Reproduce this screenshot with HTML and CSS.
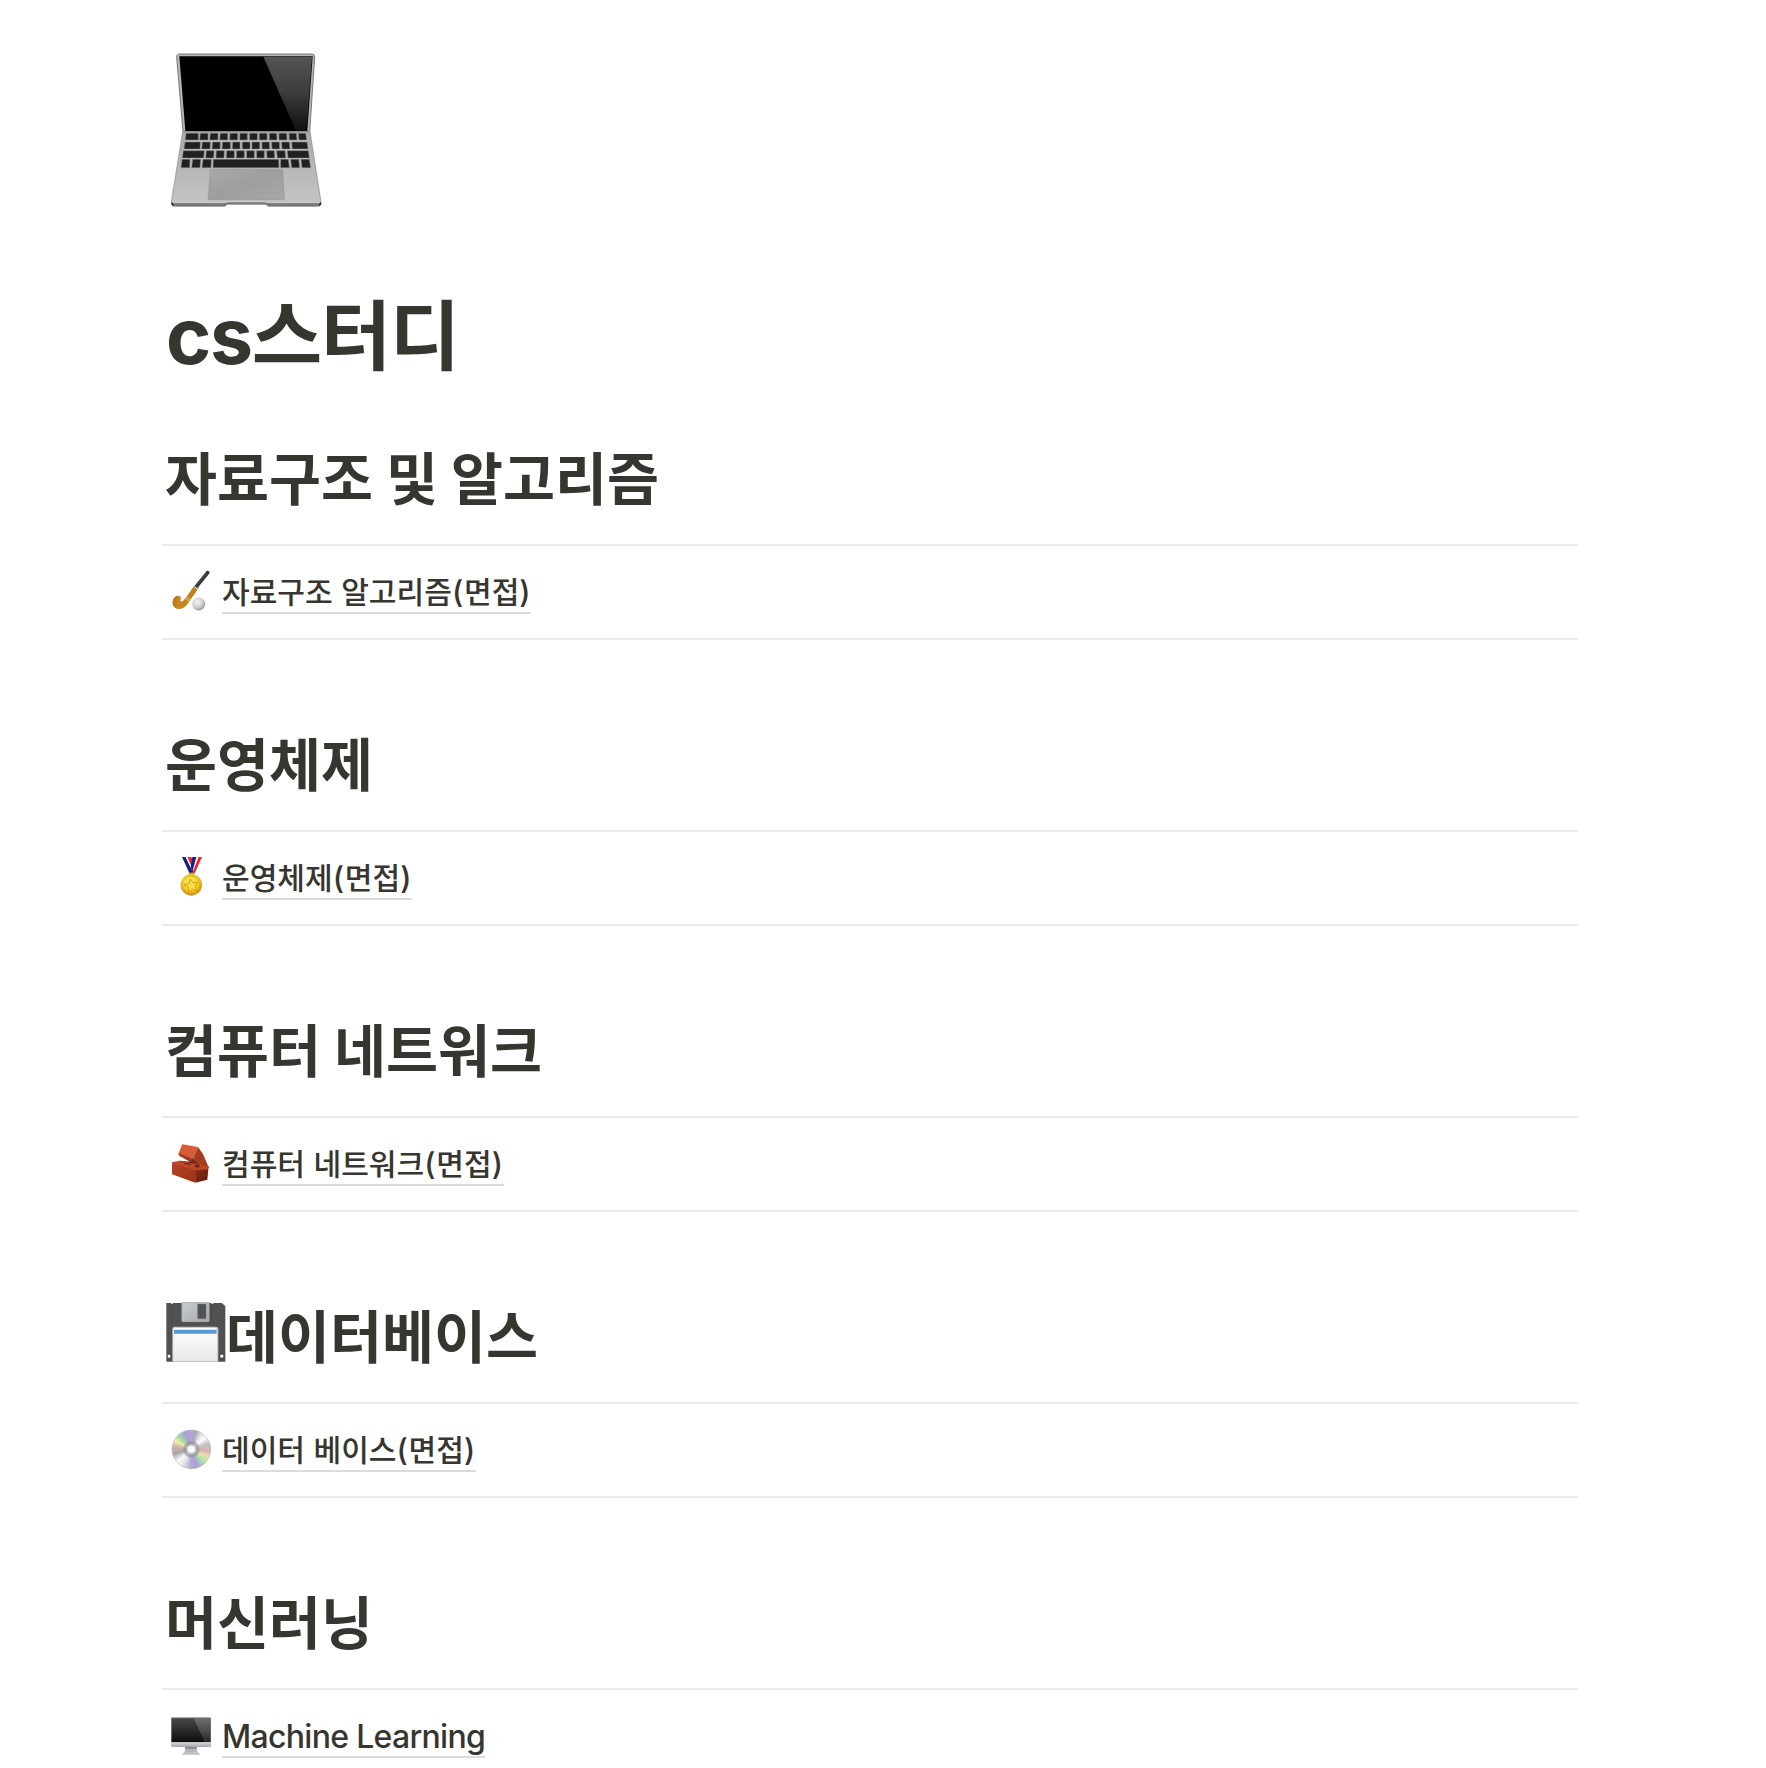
FILE: index.html
```html
<!DOCTYPE html>
<html lang="ko">
<head>
<meta charset="utf-8">
<title>cs스터디</title>
<link rel="stylesheet" href="styles.css">
</head>
<body>
<main class="page">
  <svg class="cover-icon" viewBox="36 0 534 540" aria-hidden="true">
    <defs>
      <linearGradient id="lap-body" x1="0" y1="0" x2="0" y2="1"><stop offset="0" stop-color="#aaa"/><stop offset="1" stop-color="#c5c5c5"/></linearGradient>
      <linearGradient id="lap-glare" x1="0" y1="0" x2="0" y2="1"><stop offset="0" stop-color="#555"/><stop offset=".5" stop-color="#3b3b3b"/><stop offset="1" stop-color="#111"/></linearGradient>
      <linearGradient id="lap-pad" x1="0" y1="0" x2="1" y2="1"><stop offset="0" stop-color="#a8a8a8"/><stop offset=".5" stop-color="#9e9e9e"/><stop offset="1" stop-color="#a8a8a8"/></linearGradient>
    </defs>
    <path d="M90 42H485Q495 42 494 52L479 275H99L80 52Q79 42 90 42Z" fill="#b5b5b5" stroke="#777" stroke-width="3"/>
    <path d="M88 49H488L472 273H106Z" fill="#000"/>
    <path d="M340 50H486L470 272H438Z" fill="url(#lap-glare)"/>
    <path d="M98 275H480L513 486Q514 499 502 499H355L347 493H232L224 499H75Q63 499 64 486Z" fill="url(#lap-body)" stroke="#858585" stroke-width="2"/>
    <path d="M65 489H228L234 487H345L352 489H513Q513 499 502 499H355L347 493H232L224 499H75Q64 499 65 489Z" fill="#777"/>
    <path d="M70 488H224L232 485H346L354 488H508" fill="none" stroke="#c9c9c9" stroke-width="3"/>
    <path d="M65 488L70 497M513 488L508 497" stroke="#222" stroke-width="4"/>
    <path d="M181 389H398L403 479H174Z" fill="url(#lap-pad)" stroke="#8e8e8e" stroke-width="1.5"/>
    <path d="M106 303H472M102 329.500H475M97 356H478" stroke="#ccc" stroke-width="3"/>
    <g fill="#202020" stroke="#888" stroke-width="1.5">
      <path d="M108 280H145V300H106ZM151 280H174V300H149ZM181 280H204V300H179ZM211 280H233V300H209ZM240 280H263V300H239ZM270 280H292V300H269ZM299 280H322V300H299ZM328 280H351V300H328ZM358 280H380L381 300H358ZM387 280H410L411 300H387ZM417 280H439L441 300H418ZM445 280H467L470 300H447Z"/>
      <path d="M105 306H151L150 327H102ZM157 306H181L180 327H155ZM188 306H211L210 327H186ZM218 306H241V327H216ZM248 306H270V327H247ZM277 306H300V327H277ZM306 306H329V327H306ZM336 306H358L359 327H336ZM365 306H388L389 327H366ZM395 306H418L420 327H396ZM425 306H471L474 327H427Z"/>
      <path d="M100 332H163L161 354H97ZM169 332H192L191 354H167ZM199 332H223L222 354H198ZM230 332H253V354H229ZM260 332H283V354H259ZM290 332H313V354H290ZM320 332H343V354H320ZM350 332H373L374 354H351ZM380 332H405L407 354H382ZM412 332H475L478 354H414Z"/>
      <path d="M96 358H120L119 383H93ZM128 358H152L150 383H125ZM159 358H184L183 383H156ZM190 358H386L387 383H189ZM392 358H415L418 383H392ZM422 358H446L449 383H425ZM453 358H478L482 383H456Z"/>
    </g>
  </svg>

  <h1 class="title"><span class="latin">cs</span>스터디</h1>

  <section class="topic topic-first">
    <h2 class="heading">자료구조 및 알고리즘</h2>
    <div class="row">
      <svg class="icon" viewBox="30 30 126 126" aria-hidden="true">
        <defs>
          <radialGradient id="ball" cx=".4" cy=".35" r=".7"><stop offset="0" stop-color="#f4f4f4"/><stop offset=".6" stop-color="#ccc"/><stop offset="1" stop-color="#8b8b8b"/></radialGradient>
          <linearGradient id="stick" x1="0" y1="0" x2="1" y2=".4"><stop offset="0" stop-color="#a96b12"/><stop offset=".5" stop-color="#c68a22"/><stop offset="1" stop-color="#b87a16"/></linearGradient>
        </defs>
        <path d="M102 78L114 87L87 125C79 139 67 148 55 147C43 146 36 137 38 124C40 111 51 104 59 109C67 113 59 121 62 124C66 127 71 121 77 114Z" fill="url(#stick)"/>
        <path d="M109 80L143 38" stroke="#303034" stroke-width="11" stroke-linecap="round"/>
        <path d="M112 75L140 40" stroke="#55555b" stroke-width="3"/>
        <path d="M104 80L113 87" stroke="#dfe8d8" stroke-width="4"/>
        <path d="M106 77L115 84" stroke="#176a52" stroke-width="4"/>
        <path d="M77 116L87 124M80 112L90 120" stroke="#eee2bd" stroke-width="2"/>
        <circle cx="116" cy="132" r="19.5" fill="url(#ball)"/>
      </svg>
      <a class="link">자료구조 알고리즘<span class="paren">(</span>면접<span class="paren">)</span></a>
    </div>
  </section>

  <section class="topic">
    <h2 class="heading">운영체제</h2>
    <div class="row">
      <svg class="icon" viewBox="30 30 126 126" aria-hidden="true">
        <defs><radialGradient id="gold" cx=".45" cy=".35" r=".65"><stop offset="0" stop-color="#fff05a"/><stop offset=".65" stop-color="#f6cf28"/><stop offset="1" stop-color="#d99a12"/></radialGradient></defs>
        <path d="M82 33H94L104 62L97 78Z" fill="#e8252c"/>
        <path d="M107 33H126L104 82H94Z" fill="#fff"/>
        <path d="M66 33H77L99 75V83H89Z" fill="#17207e"/>
        <path d="M77 33H82L98 69L97 76Z" fill="#fff"/>
        <path d="M97 33H109L97 77L92 63Z" fill="#17207e"/>
        <path d="M116 33H126L104 82H97Z" fill="#ed2128"/>
        <path d="M86 80H103V88H86Z" fill="#d8a82d"/>
        <circle cx="94" cy="117" r="32" fill="#d39a19"/><circle cx="93.500" cy="115.500" r="30" fill="url(#gold)"/>
        <circle cx="93.500" cy="116" r="26" fill="none" stroke="#dba51d" stroke-width="2"/>
        <path d="M90 99L99 110L113 109L105 121L111 134L97 129L86 138L86 124L73 117L88 112Z" fill="#ffe047" stroke="#c99213" stroke-width="2.500"/>
      </svg>
      <a class="link">운영체제<span class="paren">(</span>면접<span class="paren">)</span></a>
    </div>
  </section>

  <section class="topic">
    <h2 class="heading">컴퓨터 네트워크</h2>
    <div class="row">
      <svg class="icon" viewBox="30 30 126 126" aria-hidden="true">
        <defs>
          <linearGradient id="brick-front" x1="0" y1="0" x2="1" y2="1"><stop offset="0" stop-color="#b54425"/><stop offset="1" stop-color="#9c3116"/></linearGradient>
          <linearGradient id="brick-side" x1="0" y1="0" x2="1" y2="1"><stop offset="0" stop-color="#8a2c16"/><stop offset="1" stop-color="#5e1d0d"/></linearGradient>
        </defs>
        <path d="M56 63L88 76L114 104L140 108L137 116L96 108L55 88Z" fill="#51190c"/>
        <path d="M55 66L90 89L60 86L36 91V80Z" fill="#fff"/>
        <path d="M67 37L114 45L100 79L55 65Z" fill="#d65c37"/>
        <path d="M114 45L129 66L147 108L140 113L100 79Z" fill="#a43c20"/>
        <path d="M100 79L140 113L112 104L88 88Z" fill="#7b2912"/>
        <path d="M55 65L100 79L91 89L59 73Z" fill="#a83b1f"/>
        <path d="M36 91L59 86L148 104L142 116L102 117L36 96Z" fill="#bb4828"/>
        <path d="M36 93L105 115L106 152L36 127Z" fill="url(#brick-front)"/>
        <path d="M105 115L145 112L142 143L106 152Z" fill="url(#brick-side)"/>
        <path d="M71 93L94 96L90 99L73 96ZM108 98L123 103L114 107L102 103Z" fill="#6b210f"/>
      </svg>
      <a class="link">컴퓨터 네트워크<span class="paren">(</span>면접<span class="paren">)</span></a>
    </div>
  </section>

  <section class="topic">
    <h2 class="heading"><svg class="disk" viewBox="0 0 180 180" aria-hidden="true">
        <defs><linearGradient id="label" x1="0" y1="0" x2="0" y2="1"><stop offset="0" stop-color="#fff"/><stop offset="1" stop-color="#e8e8e8"/></linearGradient>
        <linearGradient id="shutter" x1="0" y1="0" x2="1" y2="1"><stop offset="0" stop-color="#c8cccf"/><stop offset="1" stop-color="#a5a9ac"/></linearGradient></defs>
        <path d="M1 3H15V6H20V3H137V6H142V3H168L178 13V179H1Z" fill="#505152"/>
        <path d="M18 5V64M136 5V62H47" fill="none" stroke="#444" stroke-width="2"/>
        <path d="M47 1H130V56Q130 60 126 60H51Q47 60 47 56Z" fill="url(#shutter)" stroke="#8b8d8f" stroke-width="1.500"/>
        <path d="M95 6H120V50H95Z" fill="#505255" stroke="#777" stroke-width="1.500"/>
        <path d="M19 179V82Q19 74 27 74H149Q157 74 157 82V179" fill="#c9c9c9"/>
        <path d="M22 178V84Q22 78 28 78H147Q153 78 153 84V178Z" fill="url(#label)"/>
        <path d="M24 83H152V95H24Z" fill="#579bd9"/>
        <path d="M4 157H14V168H4ZM162 157H173V168H162Z" fill="#fff" stroke="#333" stroke-width="2"/>
      </svg>데이터베이스</h2>
    <div class="row">
      <svg class="icon" viewBox="30 30 126 126" aria-hidden="true">
        <foreignObject x="35" y="35" width="118" height="118"><div class="disc"></div></foreignObject>
        <circle cx="94" cy="94" r="57.500" fill="none" stroke="#bbb" stroke-width="2" opacity=".8"/>
        <circle cx="94" cy="94" r="20" fill="none" stroke="#92929a" stroke-width="10" opacity=".65"/>
        <circle cx="94" cy="94" r="14" fill="#ddd" stroke="#b5b5b5" stroke-width="2"/>
        <circle cx="94" cy="94" r="9" fill="#fff"/>
      </svg>
      <a class="link">데이터 베이스<span class="paren">(</span>면접<span class="paren">)</span></a>
    </div>
  </section>

  <section class="topic">
    <h2 class="heading">머신러닝</h2>
    <div class="row">
      <svg class="icon" viewBox="30 27 126 126" aria-hidden="true">
        <defs>
          <linearGradient id="screen" x1="0" y1="0" x2="0" y2="1"><stop offset="0" stop-color="#484848"/><stop offset="1" stop-color="#0d0d0d"/></linearGradient>
          <linearGradient id="glare" x1="0" y1="0" x2="0" y2="1"><stop offset="0" stop-color="#707070"/><stop offset="1" stop-color="#292929"/></linearGradient>
          <linearGradient id="metal" x1="0" y1="0" x2="0" y2="1"><stop offset="0" stop-color="#d8dade"/><stop offset="1" stop-color="#a3a5aa"/></linearGradient>
        </defs>
        <rect x="33" y="37" width="120" height="88" rx="4" fill="#929292"/>
        <path d="M35 40H151V111H35Z" fill="url(#screen)"/>
        <path d="M101 40H151V111H134Z" fill="url(#glare)"/>
        <path d="M33 112H153V121Q153 126 148 126H38Q33 126 33 121Z" fill="url(#metal)"/>
        <path d="M76 126H110L112 142H74Z" fill="#b5b7bb"/><path d="M76 126H110V131H75Z" fill="#85878b"/>
        <path d="M73 141H113L120 147V149H66V147Z" fill="#bfc1c4"/>
      </svg>
      <a class="link link-latin">Machine Learning</a>
    </div>
  </section>
</main>
</body>
</html>
```
FILE: styles.css
```css
* { box-sizing: border-box; }

body {
  margin: 0;
  background: #fff;
  color: #37352f;
  font-family: "Noto Sans CJK KR", sans-serif;
}

.page {
  height: 1768px;
  padding: 40px 188px 0 162px;
  overflow: hidden;
}

.cover-icon {
  display: block;
  width: 178px;
  height: 180px;
}

.title {
  margin: 62px 0 0;
  padding-left: 4px;
  font-size: 76.6px;
  font-weight: 700;
  line-height: 97px;
  letter-spacing: -1.4px;
}

.latin {
  font-family: Inter, sans-serif;
  font-size: 77px;
  line-height: 0;
}

.topic { padding-top: 85px; }
.topic-first { padding-top: 60px; }

.heading {
  display: flex;
  margin: 0;
  padding: 0 0 33px 3px;
  font-size: 56.5px;
  font-weight: 700;
  line-height: 72px;
  word-spacing: -2.8px;
  white-space: pre;
}

.disk {
  width: 60px;
  height: 60px;
  margin: 5px 0 0 1px;
}

.row {
  display: flex;
  align-items: flex-start;
  gap: 10px;
  height: 96px;
  padding: 24px 8px 0;
  border-top: 2px solid #ebebea;
  border-bottom: 2px solid #ebebea;
}

.icon {
  width: 42px;
  height: 42px;
}

.link {
  height: 44px;
  border-bottom: 2px solid #dcdcdb;
  font-size: 30.1px;
  font-weight: 500;
  line-height: 41px;
}

.paren {
  font-family: Inter, sans-serif;
  font-size: 30.5px;
  line-height: 0;
  letter-spacing: 0.8px;
}

.link-latin {
  padding-top: 2px;
  font-family: Inter, sans-serif;
  font-size: 32px;
  line-height: 42px;
  letter-spacing: -0.7px;
}

.disc {
  width: 118px;
  height: 118px;
  border-radius: 50%;
  background: conic-gradient(#b7a5d0 0deg, #aaa5c0 15deg, #e8e8e8 35deg, #fff 50deg, #c4c4c4 70deg, #d7b1ae 95deg, #e5dfb0 115deg, #aee3a7 135deg, #a9a0d8 160deg, #b7a5d0 180deg, #e8e8e8 210deg, #f8f8f8 230deg, #a9a9a9 255deg, #d7b1ae 280deg, #edf0ae 298deg, #a4dc9b 315deg, #a9a0d8 340deg, #b7a5d0 360deg);
}
```
